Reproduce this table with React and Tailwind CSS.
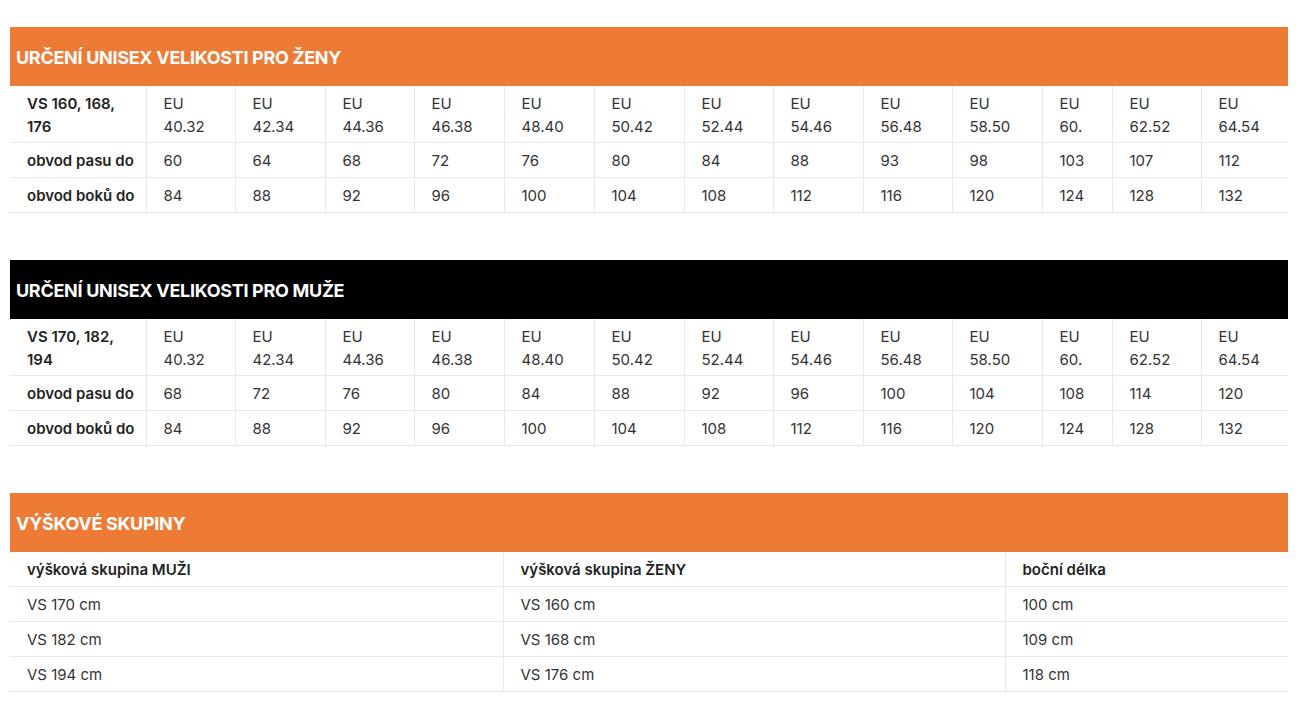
import React from "react";

const cols = [136, 89, 90, 89, 90, 90, 90, 89, 90, 89, 90, 70, 89, 87];
const eu = ["40.32", "42.34", "44.36", "46.38", "48.40", "50.42", "52.44", "54.46", "56.48", "58.50", "60.", "62.52", "64.54"];

const women = {
    title: "URČENÍ UNISEX VELIKOSTI PRO ŽENY",
    bg: "bg-[#ed7b35]",
    label: ["VS 160, 168,", "176"],
    waist: [60, 64, 68, 72, 76, 80, 84, 88, 93, 98, 103, 107, 112],
    hips: [84, 88, 92, 96, 100, 104, 108, 112, 116, 120, 124, 128, 132],
};

const men = {
    title: "URČENÍ UNISEX VELIKOSTI PRO MUŽE",
    bg: "bg-black",
    label: ["VS 170, 182,", "194"],
    waist: [68, 72, 76, 80, 84, 88, 92, 96, 100, 104, 108, 114, 120],
    hips: [84, 88, 92, 96, 100, 104, 108, 112, 116, 120, 124, 128, 132],
};

const heights = [
    ["VS 170 cm", "VS 160 cm", "100 cm"],
    ["VS 182 cm", "VS 168 cm", "109 cm"],
    ["VS 194 cm", "VS 176 cm", "118 cm"],
];

const Title = ({ text, bg }) => (
    <div className={`${bg} h-[59px] flex items-center pl-[6px] pt-[2px]`}>
        <h2 className="text-white font-bold text-[18px] tracking-[-0.3px]">{text}</h2>
    </div>
);

const SizeTable = ({ data }) => (
    <div>
        <Title text={data.title} bg={data.bg} />
        <table className="table-fixed border-collapse w-[1278px] text-[15px] leading-[23px] text-[#333]">
            <colgroup>
                {cols.map((w, i) => (
                    <col key={i} style={{ width: w }} />
                ))}
            </colgroup>
            <tbody>
                <tr className="border-b border-[#e8e8e8]">
                    <td className="pl-[17px] pr-2 pt-[6px] pb-[4px] align-top font-semibold text-[#222]">
                        {data.label[0]}
                        <br />
                        {data.label[1]}
                    </td>
                    {eu.map((v) => (
                        <td key={v} className="border-l border-[#e8e8e8] pl-[17px] pt-[6px] pb-[4px] align-top">
                            EU
                            <br />
                            {v}
                        </td>
                    ))}
                </tr>
                {[["obvod pasu do", data.waist], ["obvod boků do", data.hips]].map(([label, vals]) => (
                    <tr key={label} className="border-b border-[#e8e8e8]">
                        <td className="pl-[17px] pt-[6px] pb-[5px] font-semibold text-[#222] whitespace-nowrap">{label}</td>
                        {vals.map((v, i) => (
                            <td key={i} className="border-l border-[#e8e8e8] pl-[17px] pt-[6px] pb-[5px]">
                                {v}
                            </td>
                        ))}
                    </tr>
                ))}
            </tbody>
        </table>
    </div>
);

export default function App() {
    return (
        <div className="bg-white min-h-[722px] pt-[27px] pl-[10px] font-['Inter','Liberation_Sans',sans-serif]">
            <div className="w-[1278px] flex flex-col gap-[47px]">
                <SizeTable data={women} />
                <SizeTable data={men} />
                <div>
                    <Title text="VÝŠKOVÉ SKUPINY" bg="bg-[#ed7b35]" />
                    <table className="table-fixed border-collapse w-[1278px] text-[15px] leading-[23px] text-[#333]">
                        <colgroup>
                            <col style={{ width: 493 }} />
                            <col style={{ width: 502 }} />
                            <col style={{ width: 283 }} />
                        </colgroup>
                        <tbody>
                            <tr className="border-b border-[#e8e8e8] font-semibold text-[#222]">
                                <td className="pl-[17px] pt-[6px] pb-[5px]">výšková skupina MUŽI</td>
                                <td className="border-l border-[#e8e8e8] pl-[17px] pt-[6px] pb-[5px]">výšková skupina ŽENY</td>
                                <td className="border-l border-[#e8e8e8] pl-[17px] pt-[6px] pb-[5px]">boční délka</td>
                            </tr>
                            {heights.map((r) => (
                                <tr key={r[0]} className="border-b border-[#e8e8e8]">
                                    <td className="pl-[17px] pt-[6px] pb-[5px]">{r[0]}</td>
                                    <td className="border-l border-[#e8e8e8] pl-[17px] pt-[6px] pb-[5px]">{r[1]}</td>
                                    <td className="border-l border-[#e8e8e8] pl-[17px] pt-[6px] pb-[5px]">{r[2]}</td>
                                </tr>
                            ))}
                        </tbody>
                    </table>
                </div>
            </div>
        </div>
    );
}
